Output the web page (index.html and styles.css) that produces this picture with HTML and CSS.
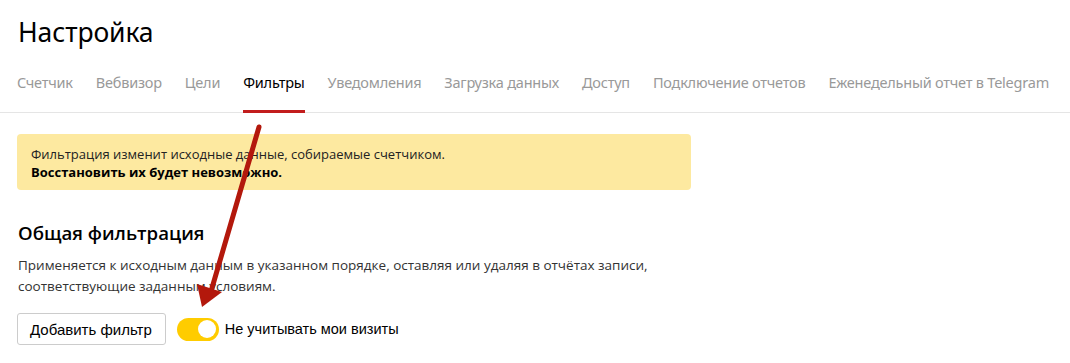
FILE: index.html
```html
<!DOCTYPE html>
<html lang="ru">
<head>
  <meta charset="UTF-8" />
  <title>Настройка</title>
  <link rel="stylesheet" href="styles.css">
</head>
<body>

  <h1 class="page-title">Настройка</h1>

  <nav class="tabs">
    <a class="tab">Счетчик</a>
    <a class="tab">Вебвизор</a>
    <a class="tab">Цели</a>
    <a class="tab tab-active">Фильтры</a>
    <a class="tab">Уведомления</a>
    <a class="tab">Загрузка данных</a>
    <a class="tab">Доступ</a>
    <a class="tab">Подключение отчетов</a>
    <a class="tab">Еженедельный отчет в Telegram</a>
  </nav>

  <div class="content">
    <div class="warning">
      <div>Фильтрация изменит исходные данные, собираемые счетчиком.</div>
      <div class="warning-strong">Восстановить их будет невозможно.</div>
    </div>

    <h2 class="section-title">Общая фильтрация</h2>
    <p class="section-text">Применяется к исходным данным в указанном порядке, оставляя или удаляя в отчётах записи,<br>соответствующие заданным условиям.</p>

    <div class="actions">
      <button class="btn">Добавить фильтр</button>
      <label class="switch">
        <span class="switch-track"><span class="switch-knob"></span></span>
        <span class="switch-label">Не учитывать мои визиты</span>
      </label>
    </div>
  </div>

  <!-- annotation arrow over the page -->
  <svg class="arrow" width="1070" height="363" viewBox="0 0 1070 363">
    <line x1="259" y1="127" x2="212" y2="288" stroke="#b3180c" stroke-width="5" stroke-linecap="round"/>
    <polygon points="197,284 222,292 202,307" fill="#b3180c"/>
  </svg>

</body>
</html>
```

FILE: styles.css
```css
body {
  margin: 0;
  font-family: 'Open Sans', 'Noto Sans', sans-serif;
  color: #000;
  background: #fff;
  position: relative;
}

.page-title {
  margin: 0;
  padding: 15px 18px 0;
  font-family: 'Noto Sans', sans-serif;
  font-size: 26.5px;
  font-weight: 400;
  line-height: 34px;
  letter-spacing: -0.1px;
}

.tabs {
  display: flex;
  gap: 23px;
  padding: 0 17px;
  margin-top: 20px;
  border-bottom: 1px solid #e5e5e5;
}

.tab {
  font-family: 'Noto Sans', sans-serif;
  font-size: 14.5px;
  letter-spacing: -0.22px;
  color: #999;
  line-height: 20px;
  padding: 3px 0 19px;
  border-bottom: 2px solid transparent;
  margin-bottom: -1px;
  white-space: nowrap;
}

.tab-active {
  color: #000;
  border-bottom: 3px solid #c21d1d;
  padding-bottom: 18px;
}

.content {
  padding: 21px 17px 0;
}

.warning {
  width: 674px;
  box-sizing: border-box;
  background: #fde9a0;
  border-radius: 4px;
  padding: 11px 14px 9px;
  font-size: 13px;
  line-height: 18px;
  color: #222;
}

.warning-strong {
  font-weight: 700;
  color: #000;
}

.section-title {
  margin: 30px 0 0;
  font-size: 18.6px;
  font-weight: 600;
  line-height: 26px;
  padding-left: 1px;
}

.section-text {
  margin: 9px 0 0;
  font-size: 13.5px;
  line-height: 21px;
  color: #333;
  padding-left: 1px;
}

.actions {
  display: flex;
  align-items: center;
  margin-top: 16px;
}

.btn {
  font-family: 'Liberation Sans', Arial, sans-serif;
  font-size: 15px;
  height: 32px;
  padding: 0 13px 0 12px;
  background: #fff;
  border: 1px solid #ccc;
  border-radius: 3px;
  color: #000;
}

.switch {
  display: flex;
  align-items: center;
  margin-left: 11px;
}

.switch-track {
  width: 42px;
  height: 23px;
  border-radius: 12px;
  background: #fc0;
  display: flex;
  justify-content: flex-end;
  align-items: center;
  padding: 0 3px;
  box-sizing: border-box;
}

.switch-knob {
  width: 18px;
  height: 18px;
  border-radius: 50%;
  background: #fff;
}

.switch-label {
  margin-left: 6px;
  font-family: 'Liberation Sans', Arial, sans-serif;
  font-size: 14.5px;
  color: #000;
}

.arrow {
  position: absolute;
  left: 0;
  top: 0;
  pointer-events: none;
}
```
